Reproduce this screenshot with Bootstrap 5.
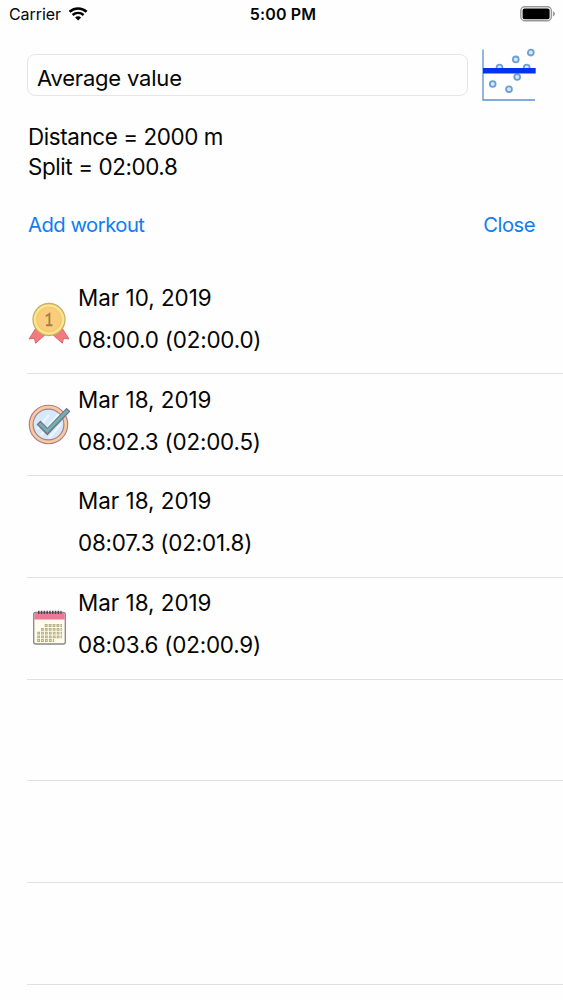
<!DOCTYPE html>
<html lang="en">
<head>
<meta charset="utf-8">
<meta name="viewport" content="width=device-width, initial-scale=1">
<title>Workouts</title>
<link href="https://cdn.jsdelivr.net/npm/bootstrap@5.3.0/dist/css/bootstrap.min.css" rel="stylesheet">
<style>
  body { font-family: Inter, "Liberation Sans", sans-serif; font-size: 22.4px; line-height: 30px; color: #050505; background: #fefefe; height: 1000px; overflow: hidden; }
  .status { height: 28px; font-size: 16px; line-height: 28px; padding: 0 8px 0 9px; }
  .status > div { flex: 1 1 0; }
  .carrier { letter-spacing: -.08px; }
  .clock { letter-spacing: .15px; padding-left: 2px; }
  .top-form { height: 54px; margin: 20px 27px 0 27px; }
  .mode-field { height: 42px; margin-top: 6px; font-size: 22px; letter-spacing: -.2px; line-height: 30px; padding: 8px 9px 0; border: 1px solid #e6e6e8; border-radius: 8px; background: #fefefe; color: #050505; width: 441px; }
  .summary { margin: 20px 28px 0; height: 60px; letter-spacing: -.4px; }
  .actions { margin: 28px 28px 0; height: 30px; }
  .actions button { font-size: 20.2px; line-height: 30px; letter-spacing: -.48px; color: #0f7df2; }
  .workouts { margin: 32.2px 0 0 27px; }
  .workout { height: 101.85px; border-bottom: 1px solid #e1e1e4; }
  .workout-icon { width: 42px; height: 42px; margin: 0 8px 0 1px; flex: none; }
  .workout p { line-height: 42px; }
  .workout-time { letter-spacing: -.2px; }
  .workout-text { padding-top: 4.5px; }
</style>
</head>
<body>
<header class="status d-flex align-items-center">
  <div class="d-flex align-items-center"><span class="carrier">Carrier</span>
    <svg class="ms-2" width="19" height="14" viewBox="0 0 19 14" fill="none" stroke="#000"><path d="M.6 4.800C5.400.4 12.800.4 17.600 4.800" stroke-width="2.600"/><path d="M3.600 8c3.200-2.800 7.800-2.800 11 0" stroke-width="2.400"/><path d="M6.100 10.400c1.700-1.500 4.300-1.500 6 0l-3 3z" fill="#000" stroke="none"/></svg>
  </div>
  <div class="text-center fw-semibold"><span class="clock">5:00 PM</span></div>
  <div class="d-flex justify-content-end">
    <svg width="35" height="16" viewBox="0 0 35 16"><rect x=".8" y=".8" width="30.6" height="14" rx="4" fill="none" stroke="#999" stroke-width="1.4"/><rect x="2.6" y="2.6" width="27" height="10.6" rx="2" fill="#000"/><path d="M33 5.2q2 .7 2 2.6t-2 2.6z" fill="#999"/></svg>
  </div>
</header>

<section class="top-form d-flex justify-content-between">
  <div class="mode-field"><span>Average value</span></div>
  <svg width="54" height="54" viewBox="0 0 54 54" fill="#d5e8f8" stroke="#6b9fd6" stroke-width="1.8">
    <path d="M1 1.5V52H53" fill="none" stroke="#5a8fd0" stroke-width="1.3"/>
    <circle cx="10.7" cy="36" r="2.9"/><circle cx="27" cy="41.2" r="2.9"/><circle cx="17.5" cy="19.5" r="2.9"/><circle cx="33.8" cy="11.4" r="2.9"/><circle cx="48.8" cy="4.6" r="2.9"/><circle cx="44.7" cy="19.5" r="2.9"/><circle cx="35.2" cy="29" r="2.9"/>
    <path d="M1 22.8H53.7" stroke="#0433ee" stroke-width="5.4"/>
  </svg>
</section>

<section class="summary">
  <div><span>Distance = 2000 m</span></div>
  <div><span>Split = 02:00.8</span></div>
</section>

<nav class="actions d-flex justify-content-between">
  <button class="btn p-0 border-0">Add workout</button>
  <button class="btn p-0 border-0">Close</button>
</nav>

<main class="workouts">
  <div class="workout d-flex align-items-center">
    <svg class="workout-icon" viewBox="0 0 42 42">
      <path d="M8 26L1 37l5.400-.8 1.300 5L18 32zM34 26l7 11-5.400-.8-1.300 5L24 32z" fill="#f37b7e" stroke="#d9686e"/>
      <circle cx="21" cy="17.500" r="16" fill="#fce58a" stroke="#c9ae68" stroke-width="1.300"/><circle cx="21" cy="17.500" r="12.500" fill="#f9cd7c" stroke="#efbd69" stroke-width=".7"/>
      <path d="M17.800 14.200l3.600-2.200v11.500M18 23.300h6.500" fill="none" stroke="#a78043" stroke-width="1.900"/>
    </svg>
    <div class="workout-text align-self-start"><p class="m-0">Mar 10, 2019</p><p class="workout-time m-0">08:00.0 (02:00.0)</p></div>
  </div>
  <div class="workout d-flex align-items-center">
    <svg class="workout-icon" viewBox="0 0 42 42">
      <circle cx="20.500" cy="21.500" r="17.300" fill="#d6e9fb" stroke="#a77d91" stroke-width="5"/><circle cx="20.500" cy="21.500" r="17.300" fill="none" stroke="#f8c99b" stroke-width="2.700"/>
      <path d="M9 26L21 12M13 32L31 11M21 35l12-14" stroke="#edf6ff" stroke-width="2"/>
      <path d="M10.500 19.500l8.800 9L40.500 6.500" fill="none" stroke="#77708f" stroke-width="5.400"/><path d="M11.500 20.500l7.800 7.500L39.500 7.500" fill="none" stroke="#70b2ac" stroke-width="3"/>
    </svg>
    <div class="workout-text align-self-start"><p class="m-0">Mar 18, 2019</p><p class="workout-time m-0">08:02.3 (02:00.5)</p></div>
  </div>
  <div class="workout d-flex align-items-center">
    <span class="workout-icon"></span>
    <div class="workout-text align-self-start"><p class="m-0">Mar 18, 2019</p><p class="workout-time m-0">08:07.3 (02:01.8)</p></div>
  </div>
  <div class="workout d-flex align-items-center">
    <svg class="workout-icon" viewBox="0 0 42 42">
      <rect x="5.700" y="5.500" width="31.600" height="31.500" rx="2" fill="#fffced" stroke="#8b8585" stroke-width="1.300"/>
      <path d="M6.300 12.500V8q0-2 2-2h26.400q2 0 2 2v4.500z" fill="#ef7898"/>
      <path d="M10 5.300H33.500" stroke="#51434b" stroke-width="3.200" stroke-dasharray="1.500 1.300"/>
      <g fill="none" stroke="#b4ac83" stroke-width="2.800" stroke-dasharray="2.800 1.100"><path d="M16.800 18.500H34"/><path d="M13 22.300H34"/><path d="M9.200 26.100H34"/><path d="M9.200 29.900H34"/><path d="M9.200 33.500H26"/></g>
      <g fill="none" stroke="#e6dfb0" stroke-width="1" stroke-dasharray="1 2.900"><path d="M17.700 18.500H34"/><path d="M13.900 22.300H34"/><path d="M10.100 26.100H34"/><path d="M10.100 29.900H34"/><path d="M10.100 33.500H26"/></g>
    </svg>
    <div class="workout-text align-self-start"><p class="m-0">Mar 18, 2019</p><p class="workout-time m-0">08:03.6 (02:00.9)</p></div>
  </div>
  <div class="workout"></div>
  <div class="workout"></div>
  <div class="workout"></div>
</main>
<script src="https://cdn.jsdelivr.net/npm/bootstrap@5.3.0/dist/js/bootstrap.bundle.min.js"></script>
</body>
</html>
